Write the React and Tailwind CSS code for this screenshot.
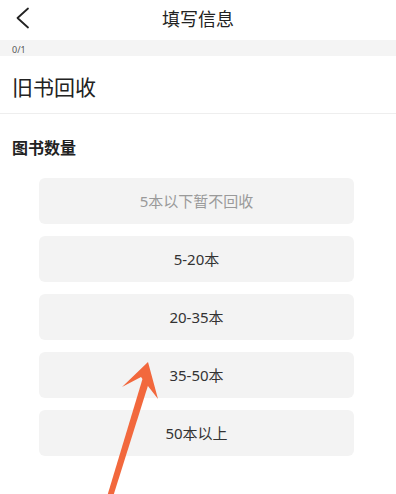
const options = [
	{ label: "5本以下暂不回收", disabled: true },
	{ label: "5-20本" },
	{ label: "20-35本" },
	{ label: "35-50本" },
	{ label: "50本以上" },
];

export default function App() {
	return (
		<div
			className="relative w-[396px] h-[494px] overflow-hidden bg-white text-[#222]"
			style={{ fontFamily: '"Noto Sans", "Noto Sans CJK SC", sans-serif' }}
		>
			{/* 顶部导航 */}
			<div className="relative h-10 flex items-center justify-center">
				<svg
					className="absolute left-0 top-0"
					width="40"
					height="40"
					viewBox="0 0 40 40"
					fill="none"
				>
					<path
						d="M28 8.5 L17.5 18 L28 27.5"
						stroke="#222"
						strokeWidth="1.8"
						strokeLinecap="round"
						strokeLinejoin="round"
					/>
				</svg>
				<h1 className="text-[18px] leading-none pb-[3px]">填写信息</h1>
			</div>

			<div className="h-4 bg-[#f4f4f4] flex items-center px-3">
				<span className="text-[9px] leading-none text-[#555] pt-[2px]">0/1</span>
			</div>

			<div className="h-[58px] flex items-center px-3 pt-[6px] border-b border-[#eeeeee]">
				<span className="text-[21px] leading-none text-[#222]">旧书回收</span>
			</div>

			<div className="px-3 pt-[26px]">
				<h2 className="text-[16px] font-bold leading-none">图书数量</h2>
			</div>

			<div className="mt-[22px] ml-[39px] w-[315px] flex flex-col gap-3">
				{options.map((o) => (
					<button
						key={o.label}
						className={
							"h-[46px] rounded-md bg-[#f3f3f3] text-[15px] " +
							(o.disabled ? "text-[#9a9a9a]" : "text-[#333]")
						}
					>
						{o.label}
					</button>
				))}
			</div>

			{/* 标注箭头 */}
			<svg
				className="absolute left-0 top-0 pointer-events-none"
				width="396"
				height="494"
				viewBox="0 0 396 494"
			>
				<path d="M106 500 L112 500 L151 376 L144 374 Z" fill="#f2683d" />
				<path d="M148 362 L122 387 L141 377 L158 399 Z" fill="#f2683d" />
			</svg>
		</div>
	);
}
